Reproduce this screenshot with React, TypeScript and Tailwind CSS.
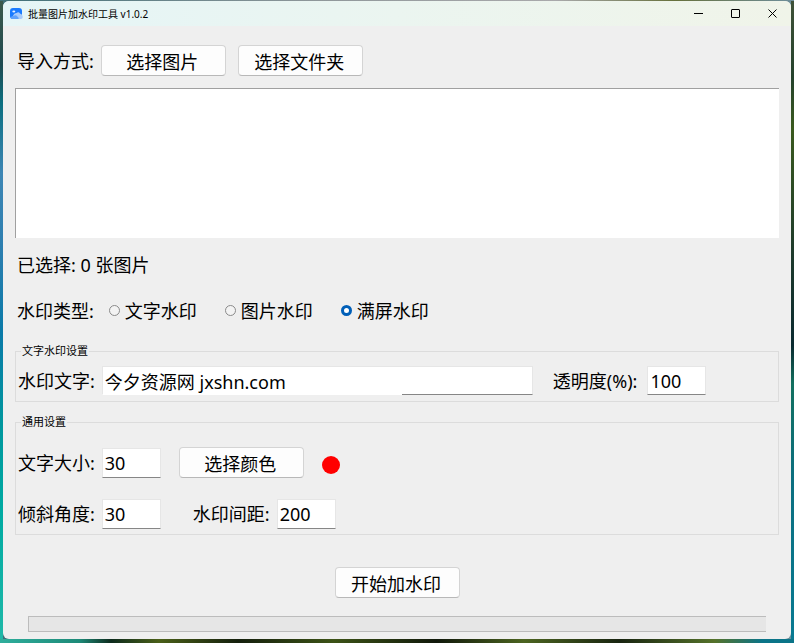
import React, { useState } from 'react';

const sunken = 'border border-[#e6e6e6] border-b-[#868686] bg-white outline-none';

interface PushButtonProps {
  children: React.ReactNode;
}

const PushButton: React.FC<PushButtonProps> = ({ children }) => (
  <button
    type="button"
    className="flex h-[31px] w-[125px] shrink-0 items-center justify-center rounded-[4px] border border-[#d4d4d4] border-b-[#b8b8b8] bg-[#fdfdfd] pt-0.5 pr-0.5 hover:bg-[#e8f2fb]"
  >
    {children}
  </button>
);

interface NumberFieldProps {
  id: string;
  label: string;
  value: string;
}

const NumberField: React.FC<NumberFieldProps> = ({ id, label, value }) => (
  <div className="flex items-center gap-[7px]">
    <label htmlFor={id} className="whitespace-nowrap">{label}</label>
    <input id={id} type="text" defaultValue={value} className={`h-[30px] w-[59px] px-0.5 ${sunken}`} />
  </div>
);

interface GroupProps {
  title: string;
  className: string;
  children: React.ReactNode;
}

const Group: React.FC<GroupProps> = ({ title, className, children }) => (
  <fieldset className={`min-w-0 border border-[#dcdcdc] px-0.5 ${className}`}>
    <legend className="ml-[3px] px-px text-[11px] leading-[14px]">{title}</legend>
    {children}
  </fieldset>
);

const AppLogo: React.FC = () => (
  <svg width="13" height="12" viewBox="0 0 13 12" aria-hidden="true">
    <rect x="0" y="0" width="12" height="11" rx="3" fill="#1a7bff" />
    <ellipse cx="3.8" cy="3.6" rx="1.5" ry="1" fill="#e4f1ff" />
    <path d="M3 8 Q4 5 6.5 5 Q8.6 3.4 10 5.6 Q12.8 6.4 12.8 9 Q12.8 11 10.5 11 H3.5 Q1.5 10.5 3 8Z" fill="#a9ccfb" />
    <path d="M0.5 9.5 Q1.5 7.6 3.6 8 Q5.6 6.2 7.4 8.4 Q9 9 8.6 11 H2.4 Q0.8 11 0.5 9.5Z" fill="#5fa2fb" />
  </svg>
);

const TitleBar: React.FC = () => (
  <header className="flex h-[25px] shrink-0 items-center bg-gradient-to-r from-[#e5f5f7] via-[#ebf5f0] to-[#f0f4e9] pl-[7px]">
    <AppLogo />
    <h1 className="ml-[5px] flex-1 text-[10px] leading-4">批量图片加水印工具 v1.0.2</h1>
    <div className="flex h-full">
      <button type="button" aria-label="最小化" className="flex w-[38px] items-center justify-center hover:bg-black/5">
        <svg width="9" height="9" viewBox="0 0 9 9" stroke="#000" fill="none">
          <path d="M0 4.5H9" />
        </svg>
      </button>
      <button type="button" aria-label="最大化" className="flex w-9 items-center justify-center hover:bg-black/5">
        <svg width="9" height="9" viewBox="0 0 9 9" stroke="#000" fill="none">
          <rect x="0.5" y="0.5" width="8" height="8" rx="0.5" />
        </svg>
      </button>
      <button type="button" aria-label="关闭" className="flex w-[38px] items-center justify-center hover:bg-red-500">
        <svg width="9" height="9" viewBox="0 0 9 9" stroke="#000" fill="none">
          <path d="M0.5 0.5L8.5 8.5M8.5 0.5L0.5 8.5" />
        </svg>
      </button>
    </div>
  </header>
);

const markTypes = [
  { key: 'text', label: '文字水印' },
  { key: 'image', label: '图片水印' },
  { key: 'full', label: '满屏水印' }
];

// the wallpaper shows as a thin rim: lake on the left, trees along the bottom and right
const leftEdge = 'bg-[linear-gradient(180deg,#3c5a4c_0%,#1f4a50_10%,#0c6f80_16%,#3d86b4_27%,#2e7fb0_38%,#0a7aa8_52%,#00969e_66%,#00aaa2_80%,#1fb8a8_100%)]';
const rightEdge = 'bg-[linear-gradient(180deg,#3f5238_0%,#24422c_12%,#3a5a1e_20%,#1d3a2c_40%,#0a2a30_54%,#12705f_60%,#0b6f80_75%,#087a92_100%)]';
const bottomEdge = 'bg-[linear-gradient(90deg,#2fae9c_0%,#1d8a78_10%,#0d2a1c_14%,#4a5f18_20%,#141f0c_30%,#3c5216_42%,#10180a_55%,#4c6420_66%,#182410_78%,#55722a_90%,#0b7488_96%)]';

export default function App() {
  const [markType, setMarkType] = useState('full');

  return (
    <div className="flex min-h-screen flex-col bg-[linear-gradient(90deg,#3f6f78_0%,#8f979a_40%,#a9a9ab_70%,#66703c_85%,#6f8f9c_100%)] pt-px font-['Noto_Sans','Noto_Sans_CJK_SC',sans-serif] text-[18px] leading-6 text-black">
      <div className="flex flex-1">
        <div className={`w-[3px] shrink-0 ${leftEdge}`} />
        <main className="flex min-w-0 flex-1 flex-col overflow-hidden rounded-[6px] bg-[#efefef]">
          <TitleBar />

          <div className="flex flex-1 flex-col px-3">
            <div className="mt-[19px] flex items-center gap-3 pl-0.5">
              <div className="flex items-center gap-[7px]">
                <span>导入方式:</span>
                <PushButton>选择图片</PushButton>
              </div>
              <PushButton>选择文件夹</PushButton>
            </div>

            <div role="listbox" aria-label="图片列表" className="mt-3 h-[150px] border-t border-l border-[#a0a0a0] bg-white" />

            <p className="mt-[15px] pl-0.5">已选择: 0 张图片</p>

            <div role="radiogroup" aria-label="水印类型" className="mt-[22px] flex items-center pl-0.5">
              <span className="mr-[15px]">水印类型:</span>
              <div className="flex gap-7">
                {markTypes.map((type) => (
                  <label key={type.key} className="flex items-center gap-[5px]">
                    <input
                      type="radio"
                      name="markType"
                      checked={markType === type.key}
                      onChange={() => setMarkType(type.key)}
                      className="mb-0.5 size-[11px] appearance-none rounded-full border border-[#8a8a8a] bg-[#f3f3f3] checked:border-[3px] checked:border-[#005fb8] checked:bg-white"
                    />
                    {type.label}
                  </label>
                ))}
              </div>
            </div>

            <Group title="文字水印设置" className="mt-[21px]">
              <div className="mb-1.5 flex items-center gap-5 pt-2">
                <div className="flex items-center gap-[7px]">
                  <label htmlFor="mark-text">水印文字:</label>
                  <input
                    id="mark-text"
                    type="text"
                    defaultValue="今夕资源网 jxshn.com"
                    className="h-[29px] w-[431px] border border-[#e6e6e6] border-b-transparent bg-white bg-[linear-gradient(90deg,#ffffff_300px,#868686_300px)] bg-[length:100%_1px] bg-bottom bg-no-repeat bg-origin-border px-0.5 outline-none"
                  />
                </div>
                <div className="flex items-center gap-2.5">
                  <label htmlFor="opacity" className="whitespace-nowrap">透明度(%):</label>
                  <input id="opacity" type="text" defaultValue="100" className={`h-[29px] w-[59px] px-0.5 ${sunken}`} />
                </div>
              </div>
            </Group>

            <Group title="通用设置" className="mt-[13px]">
              <div className="flex items-center pt-[18px]">
                <NumberField id="font-size" label="文字大小:" value="30" />
                <div className="ml-[18px] flex items-center gap-[18px]">
                  <PushButton>选择颜色</PushButton>
                  <span className="mt-1 size-[18px] rounded-full bg-[#ff0000]" />
                </div>
              </div>
              <div className="mt-[21px] mb-[5px] flex items-center gap-8">
                <NumberField id="angle" label="倾斜角度:" value="30" />
                <NumberField id="spacing" label="水印间距:" value="200" />
              </div>
            </Group>

            <div className="mt-8 flex justify-center">
              <PushButton>开始加水印</PushButton>
            </div>

            <div role="progressbar" aria-label="处理进度" aria-valuenow={0} className="mx-[13px] mt-[18px] mb-1.5 h-4 border-y border-l border-[#bcbcbc] bg-[#e6e6e6]" />
          </div>
        </main>
        <div className={`w-[3px] shrink-0 ${rightEdge}`} />
      </div>
      <div className={`h-1 shrink-0 ${bottomEdge}`} />
    </div>
  );
}
